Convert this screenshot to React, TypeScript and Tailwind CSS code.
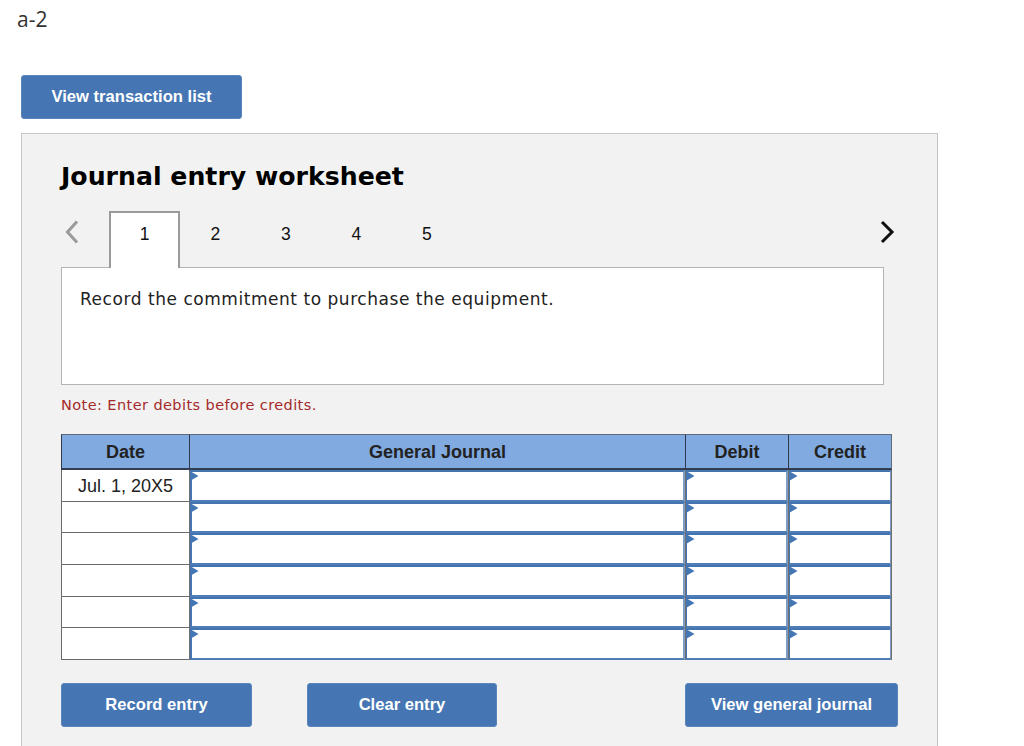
const sans = "font-['Liberation_Sans',Arial,sans-serif]";
const verdana = "font-['DejaVu_Sans',Verdana,sans-serif]";

function Cell({ w, inner }: { w: string; inner: string }) {
  return (
    <div className={`relative ${w} h-[31.67px] border-l border-[#6f6f6f] bg-[#6f7f95]`}>
      <div className={`h-full bg-white border-t-[2px] border-b-[2px] border-[#4575b0] border-b-[#4f7db5] border-r-[#7f9cc4] border-l-[#4575b0] ${inner}`} />
      <svg className="absolute left-0 top-[1px]" width="9" height="11" viewBox="0 0 9 11">
        <path d="M0 0 L8.5 5 L0 10 Z" fill="#4476b4" />
      </svg>
    </div>
  );
}

function Row({ date }: { date?: string }) {
  return (
    <div className="flex">
      <div className={`w-[128px] h-[31.67px] bg-white border-l border-b border-[#6a6a6a] flex items-center justify-center pt-[2px] text-[18px] text-[#222] ${sans}`}>
        {date}
      </div>
      <Cell w="w-[496px]" inner="border-l-[2px] border-r-[2px]" />
      <Cell w="w-[103px]" inner="border-l-[1px] border-r-[2px]" />
      <Cell w="w-[104px] border-r" inner="border-l-[1px] border-r-[1px]" />
    </div>
  );
}

function Head({ w, label, last }: { w: string; label: string; last?: boolean }) {
  return (
    <div className={`${w} h-[36px] pt-[1px] bg-[#80aae0] border-t border-l ${last ? "border-r" : ""} border-b-[2px] border-[#5f6b7a] border-l-[#2f3b4a] border-b-[#333f50] flex items-center justify-center text-[18px] font-bold text-[#222] ${sans}`}>
      {label}
    </div>
  );
}

function Btn({ label, w, low }: { label: string; w: string; low?: boolean }) {
  return (
    <button className={`${w} h-[44px] ${low ? "pt-[2px]" : ""} rounded-[3px] border border-[#5a86bd] bg-[#4576b3] text-white text-[16.6px] font-bold ${sans}`}>
      {label}
    </button>
  );
}

export default function App() {
  return (
    <div className="h-[746px] overflow-hidden bg-white pl-[21px]">
      <div className="h-[75px] -ml-[4px] pt-[6px] text-[21px] leading-[27px] text-[#333] font-['Open_Sans',sans-serif]">a-2</div>
      <Btn label="View transaction list" w="w-[221px]" />
      <div className="mt-[14px] w-[917px] h-[700px] bg-[#f2f2f2] border border-[#c8c8c8] border-r-[#c0c0c0] pl-[39px] pr-[52px]">
        <h1 className={`pt-[27px] h-[77px] text-[25.2px] leading-[32px] font-bold text-black ${verdana}`}>Journal entry worksheet</h1>
        <div className={`flex h-[57px] text-[17.5px] text-[#111] ${sans}`}>
          <div className="w-[48px] h-[42px] pl-[3px] flex items-center">
            <svg width="16" height="26" viewBox="0 0 16 26" fill="none">
              <path d="M13 2.5 L3.5 13 L13 23.5" stroke="#9a9a9a" strokeWidth="3" />
            </svg>
          </div>
          <div className="relative z-10 w-[71px] h-[57px] bg-white border-t-2 border-x-2 border-[#9a9a9a] pt-[8px] text-center">1</div>
          {["2", "3", "4", "5"].map((t) => (
            <div key={t} className="w-[70.5px] h-[46px] flex items-center justify-center">{t}</div>
          ))}
          <div className="ml-auto -mr-[10px] h-[42px] flex items-center">
            <svg width="16" height="26" viewBox="0 0 16 26" fill="none">
              <path d="M3 3 L13 13 L3 23" stroke="#111" strokeWidth="3" />
            </svg>
          </div>
        </div>
        <div className={`-mt-[1px] w-[823px] h-[118px] bg-white border border-[#b4b4b4] pl-[18px] pt-[19px] text-[17px] leading-[24px] tracking-[0.54px] text-[#222] ${verdana}`}>
          Record the commitment to purchase the equipment.
        </div>
        <p className={`mt-[9px] h-[40px] text-[14.5px] leading-[22px] tracking-[0.42px] text-[#a52a2a] ${verdana}`}>Note: Enter debits before credits.</p>
        <div className="w-[831px]">
          <div className="flex">
            <Head w="w-[128px]" label="Date" />
            <Head w="w-[496px]" label="General Journal" />
            <Head w="w-[103px]" label="Debit" />
            <Head w="w-[104px]" label="Credit" last />
          </div>
          <Row date="Jul. 1, 20X5" />
          <Row />
          <Row />
          <Row />
          <Row />
          <Row />
        </div>
        <div className="mt-[23px] w-[837px] flex">
          <Btn label="Record entry" w="w-[191px]" low />
          <div className="ml-[55px]"><Btn label="Clear entry" w="w-[190px]" low /></div>
          <div className="ml-auto"><Btn label="View general journal" w="w-[213px]" low /></div>
        </div>
      </div>
    </div>
  );
}
